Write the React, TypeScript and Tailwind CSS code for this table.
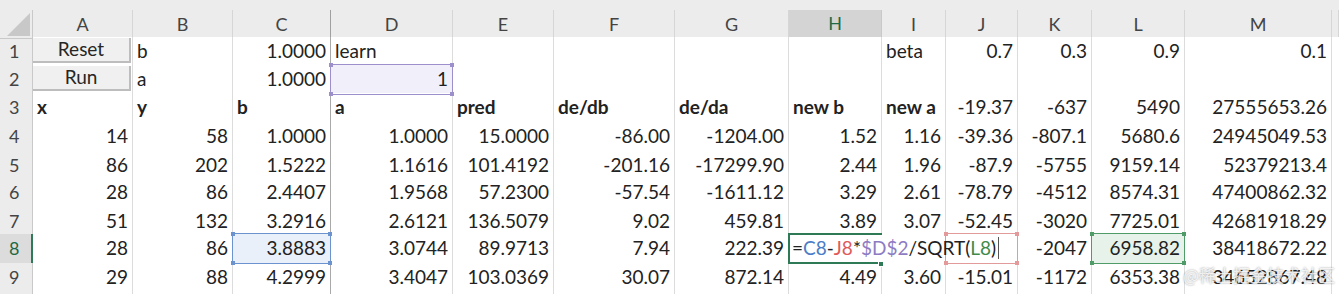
import React from "react";

// column widths measured off the sheet: row header, A..M, filler
const GRID =
  "grid grid-cols-[33px_100px_100px_98px_122px_101px_121px_114px_93px_64px_72px_74px_93px_147px_1fr]";
const LETTERS = ["A", "B", "C", "D", "E", "F", "G", "H", "I", "J", "K", "L", "M", ""];

type Row = { n: number; h: string; cells: string[] };

const rows: Row[] = [
  { n: 1, h: "h-[28px]", cells: ["Reset", "b", "1.0000", "learn", "", "", "", "", "beta", "0.7", "0.3", "0.9", "0.1", ""] },
  { n: 2, h: "h-[28px]", cells: ["Run", "a", "1.0000", "1", "", "", "", "", "", "", "", "", "", ""] },
  { n: 3, h: "h-[29px]", cells: ["x", "y", "b", "a", "pred", "de/db", "de/da", "new b", "new a", "-19.37", "-637", "5490", "27555653.26", ""] },
  { n: 4, h: "h-[29px]", cells: ["14", "58", "1.0000", "1.0000", "15.0000", "-86.00", "-1204.00", "1.52", "1.16", "-39.36", "-807.1", "5680.6", "24945049.53", ""] },
  { n: 5, h: "h-[27px]", cells: ["86", "202", "1.5222", "1.1616", "101.4192", "-201.16", "-17299.90", "2.44", "1.96", "-87.9", "-5755", "9159.14", "52379213.4", ""] },
  { n: 6, h: "h-[29px]", cells: ["28", "86", "2.4407", "1.9568", "57.2300", "-57.54", "-1611.12", "3.29", "2.61", "-78.79", "-4512", "8574.31", "47400862.32", ""] },
  { n: 7, h: "h-[27px]", cells: ["51", "132", "3.2916", "2.6121", "136.5079", "9.02", "459.81", "3.89", "3.07", "-52.45", "-3020", "7725.01", "42681918.29", ""] },
  { n: 8, h: "h-[29px]", cells: ["28", "86", "3.8883", "3.0744", "89.9713", "7.94", "222.39", "", "", "", "-2047", "6958.82", "38418672.22", ""] },
  { n: 9, h: "h-[27px]", cells: ["29", "88", "4.2999", "3.4047", "103.0369", "30.07", "872.14", "4.49", "3.60", "-15.01", "-1172", "6353.38", "34652867.48", ""] },
  { n: 10, h: "h-[28px]", cells: ["", "", "", "", "", "", "", "", "", "", "", "", "", ""] },
];

const isLeft = (r: number, c: number) =>
  (r <= 2 && (c === 1 || c === 8)) || (r === 1 && c === 3) || (r === 3 && c <= 8);

// little squares Excel draws on the corners of a referenced range
function Marks({ color }: { color: string }) {
  return (
    <>
      <span className={`absolute -left-[2px] -top-[2px] h-[4px] w-[4px] ${color}`} />
      <span className={`absolute -right-[2px] -top-[2px] h-[4px] w-[4px] ${color}`} />
      <span className={`absolute -left-[2px] -bottom-[2px] h-[4px] w-[4px] ${color}`} />
      <span className={`absolute -right-[2px] -bottom-[2px] h-[4px] w-[4px] ${color}`} />
    </>
  );
}

function Formula() {
  return (
    <div className="absolute left-[3px] top-0 z-20 flex h-full items-center whitespace-nowrap">
      <span>=</span>
      <span className="text-[#4a7cc7]">C8</span>
      <span>-</span>
      <span className="text-[#e05a5a]">J8</span>
      <span>*</span>
      <span className="text-[#8e7cc3]">$D$2</span>
      <span>/SQRT(</span>
      <span className="text-[#3f8c4a]">L8</span>
      <span>)</span>
      <span className="ml-[2px] inline-block h-[22px] w-px bg-[#555]" />
    </div>
  );
}

function Cell({ r, c, v }: { r: number; c: number; v: string }) {
  const col = c + 1; // grid column, A = 1
  const border = [
    "border-b",
    r === 3 ? "border-b-[#a9a9a9]" : "border-b-[#dcdcdc]",
    "border-r",
    col === 3 ? "border-r-[#a9a9a9]" : r === 8 && col === 8 ? "border-r-white" : "border-r-[#dcdcdc]",
  ].join(" ");

  if ((r === 1 || r === 2) && col === 1) {
    return (
      <div className={`${border} flex items-start bg-white`}>
        <button className="mt-[1px] flex h-[25px] w-[98px] items-center justify-center border-b-2 border-r-2 border-b-[#bdbdbd] border-r-[#bdbdbd] bg-[#f0f0f0] text-[#262626]">
          {v}
        </button>
      </div>
    );
  }

  let overlay: React.ReactNode = null;
  let bg = "bg-white";
  if (r === 2 && col === 4) {
    bg = "bg-[#f1eff9]";
    overlay = (
      <div className="pointer-events-none absolute -inset-px z-10 border border-[#9d8fcc]">
        <Marks color="bg-[#9d8fcc]" />
      </div>
    );
  }
  if (r === 8 && col === 3) {
    bg = "bg-[#e9f0fa]";
    overlay = (
      <div className="pointer-events-none absolute -inset-px z-10 border border-[#6b93cf]">
        <Marks color="bg-[#6b93cf]" />
      </div>
    );
  }
  if (r === 8 && col === 10) {
    overlay = (
      <div className="pointer-events-none absolute -inset-px z-10 border border-[#e29a9a]">
        <Marks color="bg-[#e29a9a]" />
      </div>
    );
  }
  if (r === 8 && col === 12) {
    bg = "bg-[#e7f3ea]";
    overlay = (
      <div className="pointer-events-none absolute -inset-px z-10 border border-[#4f9c69]">
        <Marks color="bg-[#4f9c69]" />
      </div>
    );
  }
  if (r === 8 && col === 8) {
    overlay = (
      <>
        <div className="pointer-events-none absolute -inset-px z-10 border-2 border-r-0 border-[#2f7a56]" />
        <span className="absolute -bottom-[4px] right-[-3px] z-20 h-[6px] w-[6px] border border-white bg-[#2f7a56]" />
        <Formula />
      </>
    );
  }

  const align = isLeft(r, c) ? "justify-start" : "justify-end";
  const weight = r === 3 && c <= 8 ? "font-bold" : "";

  return (
    <div className={`relative flex items-center whitespace-nowrap px-[4px] ${bg} ${border} ${align} ${weight}`}>
      {v}
      {overlay}
    </div>
  );
}

export default function App() {
  return (
    <div className="relative h-[294px] w-[1339px] overflow-hidden bg-white font-['Lato','Open_Sans',sans-serif] text-[19px] text-[#222]">
      <div className="h-[10px] bg-[#ececec]" />
      <div className={`${GRID} h-[27px] bg-[#ececec] text-[18px] text-[#444]`}>
        <div className="relative border-b border-r border-[#c9c9c9]">
          <svg className="absolute bottom-[2px] right-[2px]" width="23" height="23" viewBox="0 0 23 23">
            <polygon points="0,23 23,0 23,23" fill="#c8c8c8" />
          </svg>
        </div>
        {LETTERS.map((l, i) =>
          l === "H" ? (
            <div
              key={i}
              className="flex items-center justify-center border-b-2 border-r border-b-[#2f7a56] border-r-[#c9c9c9] bg-[#d4d4d4] text-[#1f6a44]"
            >
              {l}
            </div>
          ) : (
            <div
              key={i}
              className={`flex items-center justify-center border-b border-r border-b-[#c9c9c9] ${
                l === "C" ? "border-r-[#a0a0a0]" : "border-r-[#d6d6d6]"
              }`}
            >
              {l}
            </div>
          )
        )}
      </div>
      {rows.map((row) => (
        <div key={row.n} className={`${GRID} ${row.h}`}>
          {row.n === 8 ? (
            <div className="flex items-center border-b border-r-2 border-b-[#d0d0d0] border-r-[#2f7a56] bg-[#dcdcdc] pl-[9px] text-[18px] text-[#1f6a44]">
              {row.n}
            </div>
          ) : (
            <div className="flex items-center border-b border-r border-b-[#d6d6d6] border-r-[#c9c9c9] bg-[#ececec] pl-[9px] text-[18px] text-[#444]">
              {row.n < 10 ? row.n : ""}
            </div>
          )}
          {row.cells.map((v, c) => (
            <Cell key={c} r={row.n} c={c} v={v} />
          ))}
        </div>
      ))}
      <div className="pointer-events-none absolute bottom-[7px] right-[4px] z-30 font-['Noto_Sans_CJK_SC',sans-serif] text-[17px] text-white/80 [text-shadow:0_0_2px_rgba(0,0,0,0.45)]">
        @稀土掘金技术社区
      </div>
    </div>
  );
}
